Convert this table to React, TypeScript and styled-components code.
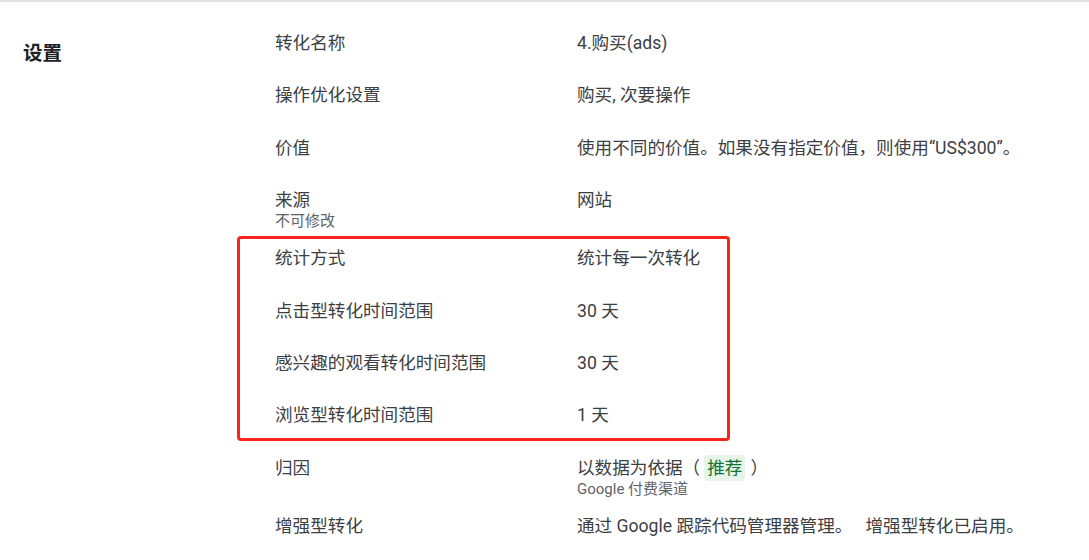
import React from "react";
import styled, { createGlobalStyle } from "styled-components";

const Global = createGlobalStyle`
  html, body { margin: 0; padding: 0; background: #ffffff; }
  body { font-family: Roboto, "Noto Sans CJK SC", "Noto Sans", sans-serif; }
`;

const Page = styled.div`
  width: 1089px;
  height: 560px;
  box-sizing: border-box;
  border-top: 2px solid #dfe1e5;
  display: grid;
  grid-template-columns: 252px 1fr;
  padding: 15px 0 0 23px;
  overflow: hidden;
`;

const Title = styled.h2`
  margin: 24px 0 0;
  font-size: 19.5px;
  line-height: 26px;
  font-weight: 700;
  color: #202124;
`;

const List = styled.div`
  display: flex;
  flex-direction: column;
`;

const Group = styled.div`
  position: relative;
  display: flex;
  flex-direction: column;
  &::after {
    content: "";
    position: absolute;
    left: -38px;
    top: 4px;
    width: 493px;
    bottom: 1px;
    box-sizing: border-box;
    border: 3px solid #f7251b;
    border-radius: 4px;
    pointer-events: none;
  }
`;

const Row = styled.div`
  display: grid;
  grid-template-columns: 302px 1fr;
  min-height: 52.4px;
  box-sizing: border-box;
  padding-top: 13px;
`;

const Cell = styled.div`
  display: flex;
  flex-direction: column;
`;

const Main = styled.div`
  font-size: 17.6px;
  line-height: 26px;
  color: #3c4043;
  white-space: pre;
  display: flex;
  align-items: center;
`;

const Sub = styled.div`
  font-size: 15px;
  line-height: 17px;
  padding-bottom: 2px;
  color: #5f6368;
  white-space: nowrap;
`;

const Badge = styled.span`
  display: inline-block;
  background: #e6f4ea;
  color: #137333;
  border-radius: 4px;
  padding: 0 3px;
  margin: 0 5px 0 4px;
  line-height: 26px;
`;

type Item = { label: string; sub?: string; value: React.ReactNode; valueSub?: string };

const Entry = ({ label, sub, value, valueSub }: Item) => (
  <Row>
    <Cell>
      <Main>{label}</Main>
      {sub && <Sub>{sub}</Sub>}
    </Cell>
    <Cell>
      <Main>{value}</Main>
      {valueSub && <Sub>{valueSub}</Sub>}
    </Cell>
  </Row>
);

export default function App() {
  return (
    <>
      <Global />
      <Page>
        <Title>设置</Title>
        <List>
          <Entry label="转化名称" value="4.购买(ads)" />
          <Entry label="操作优化设置" value="购买, 次要操作" />
          <Entry label="价值" value="使用不同的价值。如果没有指定价值，则使用“US$300”。" />
          <Entry label="来源" sub="不可修改" value="网站" />
          <Group>
            <Entry label="统计方式" value="统计每一次转化" />
            <Entry label="点击型转化时间范围" value="30 天" />
            <Entry label="感兴趣的观看转化时间范围" value="30 天" />
            <Entry label="浏览型转化时间范围" value="1 天" />
          </Group>
          <Entry
            label="归因"
            value={
              <>
                以数据为依据（<Badge>推荐</Badge>）
              </>
            }
            valueSub="Google 付费渠道"
          />
          <Entry label="增强型转化" value="通过 Google 跟踪代码管理器管理。   增强型转化已启用。" />
        </List>
      </Page>
    </>
  );
}
